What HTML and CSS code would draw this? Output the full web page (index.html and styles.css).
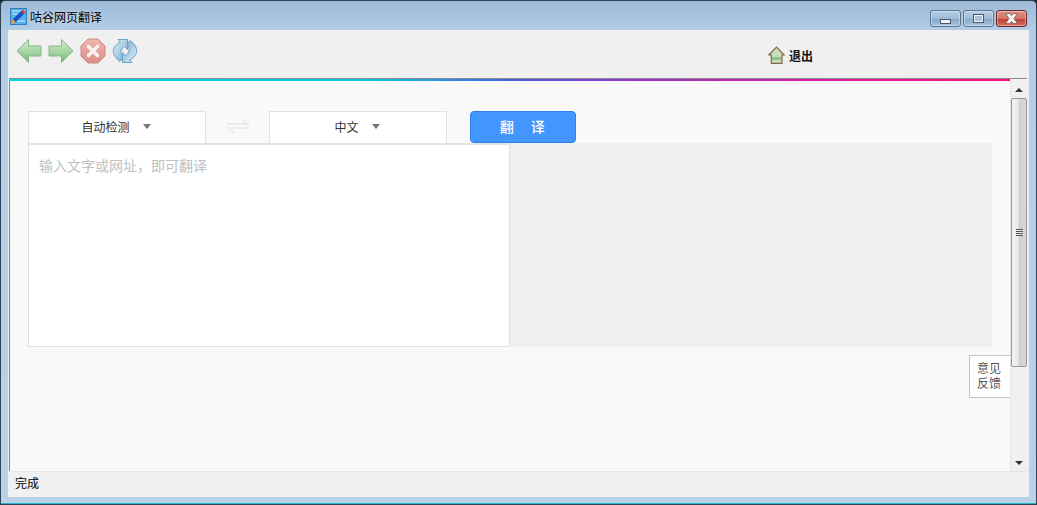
FILE: index.html
```html
<!DOCTYPE html>
<html lang="zh">
<head>
<meta charset="utf-8">
<title>咕谷网页翻译</title>
<link rel="stylesheet" href="styles.css">
</head>
<body>
<div class="window">
  <header class="titlebar">
    <svg class="app-icon" width="17" height="17" viewBox="0 0 17 17">
      <rect x=".5" y=".5" width="16" height="16" fill="#52b2e8" stroke="#2f7fc4"/>
      <path d="M2 3h13M2 6h7M2 13h13" stroke="#d8f0fb" stroke-width="1.200"/>
      <path d="M4 13 13 4" stroke="#1b4fc4" stroke-width="4"/>
      <path d="M12 2.500 14.500 5" stroke="#d8402c" stroke-width="2.500"/>
      <path d="M1.500 16 2.500 11 6 14.500z" fill="#f0a040"/>
    </svg>
    <span class="title">咕谷网页翻译</span>
    <div class="controls">
      <span class="ctl"><i class="glyph-min"></i></span>
      <span class="ctl"><i class="glyph-max"></i></span>
      <span class="ctl ctl-close">
        <svg width="17" height="11" viewBox="0 0 17 11"><path d="M2.500.5h4l2 2 2-2h4l-3.500 5 3.500 5h-4l-2-2-2 2h-4l3.500-5z" fill="#f4f4f4" stroke="#6a4a48" stroke-width=".7"/></svg>
      </span>
    </div>
  </header>
  <div class="client">
    <div class="toolbar">
      <div class="nav-icons">
        <svg width="26" height="26" viewBox="0 0 26 26"><defs><linearGradient id="g1" x1="0" y1="0" x2="0" y2="1"><stop offset="0" stop-color="#d4ebd0"/><stop offset=".55" stop-color="#a5d4a2"/><stop offset="1" stop-color="#74b578"/></linearGradient></defs><path d="M1 13 12.500 1.500V8H25v10H12.500v6.500z" fill="url(#g1)" stroke="#86b888"/></svg>
        <svg width="26" height="26" viewBox="0 0 26 26"><path d="M25 13 13.500 1.500V8H1v10h12.500v6.500z" fill="url(#g1)" stroke="#86b888"/></svg>
        <svg width="26" height="26" viewBox="0 0 26 26"><defs><linearGradient id="g2" x1="0" y1="0" x2="0" y2="1"><stop offset="0" stop-color="#eeb5ae"/><stop offset="1" stop-color="#dd8f88"/></linearGradient></defs><path d="M8 1h10l7 7v10l-7 7H8l-7-7V8z" fill="url(#g2)" stroke="#c98a84"/><path d="M8.500 8.500l9 9m0-9-9 9" stroke="#f8f2f0" stroke-width="3.600" stroke-linecap="round"/></svg>
        <svg width="26" height="26" viewBox="0 0 26 26"><defs><linearGradient id="g3" x1="0" y1="0" x2="1" y2="1"><stop offset="0" stop-color="#e4f1f9"/><stop offset="1" stop-color="#6ea8cf"/></linearGradient></defs><path d="M6 1.500h9.500v10l-3-3C9 11 7.500 15 10.500 20L8 23.500C-1 17-1 9 8.500 4z" fill="url(#g3)" stroke="#6b9fc4"/><path transform="rotate(180 13 13)" d="M6 1.500h9.500v10l-3-3C9 11 7.500 15 10.500 20L8 23.500C-1 17-1 9 8.500 4z" fill="url(#g3)" stroke="#6b9fc4"/></svg>
      </div>
      <div class="logout">
        <svg width="17" height="18" viewBox="0 0 17 18"><path d="M.8 9 8.500 1l7.700 8H14v8.300H3.300V9z" fill="#c4e0bc" stroke="#8a6248" stroke-width="1.200"/><rect x="4" y="11" width="9.300" height="3" fill="#8fc08a"/></svg>
        <span>退出</span>
      </div>
    </div>
    <div class="rainbow"></div>
    <div class="viewport">
      <main class="page">
        <div class="lang-row">
          <div class="select"><span>自动检测</span><i class="caret"></i></div>
          <svg class="swap" width="24" height="20" viewBox="0 0 24 20"><path d="M1 8h21l-6-5M23 12H2l6 5" fill="none" stroke="#ececec" stroke-width="2"/></svg>
          <div class="select"><span>中文</span><i class="caret"></i></div>
          <button class="translate" type="button">翻&emsp;译</button>
        </div>
        <div class="panes">
          <div class="source">输入文字或网址，即可翻译</div>
          <div class="result"></div>
        </div>
        <div class="feedback">意见<br>反馈</div>
      </main>
      <div class="scrollbar">
        <div class="arrow arrow-up"></div>
        <div class="thumb"><i class="grip"></i></div>
        <div class="track"></div>
        <div class="arrow arrow-down"></div>
      </div>
    </div>
    <footer class="status">完成</footer>
  </div>
</div>
</body>
</html>
```

FILE: styles.css
```css
* { box-sizing: border-box; }
html, body { margin: 0; height: 100%; overflow: hidden; }
body {
  font-family: "Noto Sans CJK SC", "Liberation Sans", sans-serif;
  font-size: 12px;
  color: #000;
  background: #1d2a33;
}
.window {
  width: 1037px;
  height: 505px;
  display: flex;
  flex-direction: column;
  padding: 1px 7px 7px 7px;
  border: 1px solid #2f4356;
  border-radius: 5px 5px 0 0;
  background: linear-gradient(180deg, #9cb9d8 0, #b3cde6 30px, #b9d2ea 100%);
  box-shadow: inset 0 -1px 0 #1fb4c8;
}
.titlebar {
  height: 28px;
  flex: none;
  display: flex;
  align-items: center;
  gap: 3px;
}
.app-icon { flex: none; margin-left: 2px; }
.title { font-size: 12px; color: #000; text-shadow: 0 0 4px #dbe8f5; }
.controls { align-self: flex-start; margin: 8px 2px 0 auto; display: flex; gap: 2px; }
.ctl {
  width: 31px;
  height: 17px;
  display: flex;
  align-items: center;
  justify-content: center;
  border: 1px solid #5a7691;
  border-radius: 3px;
  background: linear-gradient(180deg, #b7cde4 0, #a0bcd9 50%, #84a5c5 52%, #a9c5de 100%);
  box-shadow: inset 0 0 0 1px rgba(255, 255, 255, .35);
}
.ctl-close {
  border-color: #6b2530;
  background: linear-gradient(180deg, #dc9488 0, #d27365 50%, #b8402f 52%, #d4705f 100%);
}
.glyph-min { width: 11px; height: 5px; margin-top: 5px; background: #f2f4f7; border: 1px solid #46586b; }
.glyph-max { width: 11px; height: 9px; border: 2px solid #f2f4f7; outline: 1px solid #46586b; outline-offset: -1px; background: #a9c3de; }
.client {
  flex: 1;
  min-height: 0;
  display: flex;
  flex-direction: column;
  background: #f0f0f0;
}
.toolbar {
  height: 48px;
  flex: none;
  display: flex;
  align-items: flex-start;
  padding: 8px 0 0 8px;
}
.nav-icons { display: flex; gap: 6px; }
.logout {
  margin-left: 630px;
  margin-top: 8px;
  display: flex;
  align-items: center;
  gap: 4px;
  font-size: 12px;
  font-weight: 700;
  color: #111;
}
.rainbow {
  height: 3px;
  flex: none;
  margin: 0 2px 0 1px;
  border-top: 1px solid #8a8a8a;
  background: linear-gradient(90deg, #00d4f4 0, #08c8e8 36%, #4a60dc 50%, #a030c8 64%, #e81898 86%, #f81080 100%) no-repeat left top / 1001px 100%;
}
.viewport {
  flex: 1;
  min-height: 0;
  display: flex;
  margin: 0 2px 0 1px;
  border-left: 1px solid #808080;
  background: #f9f9f9;
}
.page {
  position: relative;
  flex: 1;
  padding: 30px 0 0 18px;
}
.lang-row { display: flex; align-items: center; height: 32px; }
.select {
  width: 178px;
  height: 32px;
  display: flex;
  align-items: center;
  justify-content: center;
  gap: 13px;
  padding: 0 2px 2px 0;
  background: #fff;
  border: 1px solid #e3e3e3;
  border-bottom: 0;
  font-size: 12px;
  color: #333;
}
.caret {
  width: 0;
  height: 0;
  border-left: 4.5px solid transparent;
  border-right: 4.5px solid transparent;
  border-top: 5px solid #6d7580;
}
.swap { margin: 0 19px 3px 20px; }
.translate {
  width: 106px;
  height: 32px;
  margin-left: 23px;
  padding: 0 0 2px;
  border: 1px solid #2b80f0;
  border-radius: 4px;
  background: #4396ff;
  color: #fff;
  font-family: inherit;
  font-size: 14px;
  letter-spacing: 1.5px;
  font-weight: 500;
}
.panes { display: flex; height: 204px; width: 964px; }
.source {
  flex: 0 0 482px;
  background: #fff;
  border: 1px solid #e0e0e0;
  border-top: 2px solid #e3e3e3;
  padding: 10px 10px;
  font-size: 14px;
  line-height: 20px;
  color: #c0c0c0;
}
.result { flex: 1; background: #efefef; }
.feedback {
  position: absolute;
  right: 0;
  top: 274px;
  width: 41px;
  height: 43px;
  padding: 4px 0 0 7px;
  background: #fff;
  border: 1px solid #c4c4c4;
  border-right: 0;
  font-size: 12px;
  line-height: 15px;
  color: #555;
}
.scrollbar {
  flex: 0 0 17px;
  display: flex;
  flex-direction: column;
  background: #f0f0f0;
  border-left: 1px dotted #dcdcdc;
}
.arrow { height: 17px; flex: none; display: flex; align-items: center; justify-content: center; }
.arrow::before { content: ""; width: 0; height: 0; border-left: 4px solid transparent; border-right: 4px solid transparent; }
.arrow-up::before { border-bottom: 4px solid #333; }
.arrow-down::before { border-top: 4px solid #333; }
.thumb {
  height: 269px;
  flex: none;
  display: flex;
  align-items: center;
  justify-content: center;
  border: 1px solid #989898;
  border-radius: 2px;
  background: linear-gradient(90deg, #f3f3f3 0, #e8e8e8 45%, #cfcfcf 50%, #d8d8d8 100%);
}
.grip { width: 7px; height: 7px; background: repeating-linear-gradient(180deg, #555 0, #555 1px, #e8e8e8 1px, #e8e8e8 2px); }
.track { flex: 1; }
.status {
  height: 26px;
  flex: none;
  padding: 2px 0 0 7px;
  font-size: 12px;
  line-height: 18px;
  color: #000;
  background: #f0f0f0;
  border-top: 1px solid #e6e6e6;
}
```
